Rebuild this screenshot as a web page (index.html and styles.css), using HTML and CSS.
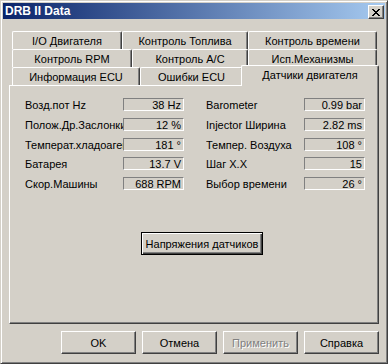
FILE: index.html
```html
<!DOCTYPE html>
<html lang="ru">
<head>
<meta charset="utf-8">
<title>DRB II Data</title>
<link rel="stylesheet" href="styles.css">
</head>
<body>
<div class="window">
  <div class="titlebar">
    <span class="title">DRB II Data</span>
    <div class="close">
      <svg width="8" height="7" viewBox="0 0 8 7" shape-rendering="crispEdges"><path fill="#000" d="M0 0h2v1H0z M6 0h2v1H6z M1 1h2v1H1z M5 1h2v1H5z M2 2h4v1H2z M3 3h2v1H3z M2 4h4v1H2z M1 5h2v1H1z M5 5h2v1H5z M0 6h2v1H0z M6 6h2v1H6z"/></svg>
    </div>
  </div>

  <div class="tabs">
    <div class="tabrow">
      <div class="tab w110">I/O Двигателя</div>
      <div class="tab w126">Контроль Топлива</div>
      <div class="tab w129">Контроль времени</div>
    </div>
    <div class="tabrow">
      <div class="tab w120">Контроль RPM</div>
      <div class="tab w116">Контроль A/C</div>
      <div class="tab w129">Исп.Механизмы</div>
    </div>
    <div class="tabrow">
      <div class="tab w128">Информация ECU</div>
      <div class="tab w103">Ошибки ECU</div>
      <div class="tab selected">Датчики двигателя</div>
    </div>
  </div>

  <div class="panel">
    <div class="fields">
      <div class="field"><span class="label">Возд.пот Hz</span><span class="value">38 Hz</span></div>
      <div class="field"><span class="label">Barometer</span><span class="value">0.99 bar</span></div>
      <div class="field"><span class="label">Полож.Др.Заслонки</span><span class="value">12 %</span></div>
      <div class="field"><span class="label">Injector Ширина</span><span class="value">2.82 ms</span></div>
      <div class="field"><span class="label">Температ.хладоагента</span><span class="value">181 °</span></div>
      <div class="field"><span class="label">Темпер. Воздуха</span><span class="value">108 °</span></div>
      <div class="field"><span class="label">Батарея</span><span class="value">13.7 V</span></div>
      <div class="field"><span class="label">Шаг Х.Х</span><span class="value">15</span></div>
      <div class="field"><span class="label">Скор.Машины</span><span class="value">688 RPM</span></div>
      <div class="field"><span class="label">Выбор времени</span><span class="value">26 °</span></div>
    </div>
    <button class="btn default sensor">Напряжения датчиков</button>
  </div>

  <div class="buttons">
    <button class="btn">OK</button>
    <button class="btn">Отмена</button>
    <button class="btn disabled">Применить</button>
    <button class="btn">Справка</button>
  </div>
</div>
</body>
</html>
```

FILE: styles.css
```css
html, body {
  margin: 0;
  padding: 0;
  background: #d4d0c8;
}

body {
  font-family: "Liberation Sans", Arial, sans-serif;
  font-size: 11px;
  color: #000;
}

.window {
  box-sizing: border-box;
  width: 388px;
  height: 364px;
  padding: 2px;
  background: #d4d0c8;
  border: 1px solid;
  border-color: #d4d0c8 #404040 #404040 #d4d0c8;
  box-shadow: inset 1px 1px #ffffff, inset -1px -1px #808080;
}

.titlebar {
  display: flex;
  align-items: flex-start;
  height: 16px;
  padding-left: 2px;
  background: linear-gradient(to right, #0a246a, #a6caf0);
}

.title {
  flex: 1;
  color: #fff;
  font-weight: bold;
  font-size: 12px;
  line-height: 16px;
  white-space: nowrap;
}

.close {
  box-sizing: border-box;
  width: 16px;
  height: 14px;
  margin-top: 2px;
  margin-right: 1px;
  display: flex;
  align-items: center;
  justify-content: center;
  background: #d4d0c8;
  border: 1px solid;
  border-color: #ffffff #404040 #404040 #ffffff;
  box-shadow: inset -1px -1px #808080;
}

.close svg {
  display: block;
}

.tabs {
  margin-top: 12px;
  margin-left: 9px;
  width: 365px;
}

.tabrow {
  display: flex;
  height: 18px;
  align-items: flex-start;
}

.tab {
  box-sizing: border-box;
  flex-shrink: 0;
  height: 18px;
  padding-top: 1px;
  line-height: 16px;
  text-align: center;
  white-space: nowrap;
  background: #d4d0c8;
  border-top: 1px solid #ffffff;
  border-left: 1px solid #ffffff;
  border-right: 1px solid #404040;
  border-radius: 2px 2px 0 0;
  box-shadow: inset -1px 0 #808080;
}

.w103 { width: 103px; }
.w110 { width: 110px; }
.w116 { width: 116px; }
.w120 { width: 120px; }
.w126 { width: 126px; }
.w128 { width: 128px; }
.w129 { width: 129px; }

.tab.selected {
  position: relative;
  z-index: 2;
  width: 138px;
  height: 21px;
  margin: -2px -2px 0 -2px;
  padding-top: 1px;
}

.panel {
  box-sizing: border-box;
  width: 370px;
  height: 239px;
  margin-left: 6px;
  padding: 12px 0 0 15px;
  background: #d4d0c8;
  border: 1px solid;
  border-color: #ffffff #404040 #404040 #ffffff;
  box-shadow: inset -1px -1px #808080;
}

.fields {
  display: grid;
  grid-template-columns: 159px 159px;
  column-gap: 22px;
  row-gap: 6.75px;
}

.field {
  display: flex;
  height: 13px;
}

.label {
  width: 98px;
  overflow: hidden;
  white-space: nowrap;
  line-height: 14px;
}

.value {
  box-sizing: border-box;
  width: 61px;
  height: 13px;
  padding-right: 2px;
  line-height: 12px;
  text-align: right;
  white-space: nowrap;
  overflow: hidden;
  border: 1px solid;
  border-color: #808080 #ffffff #ffffff #808080;
}

.btn {
  box-sizing: border-box;
  width: 75px;
  height: 23px;
  padding: 0;
  margin: 0;
  font-family: "Liberation Sans", Arial, sans-serif;
  font-size: 11px;
  color: #000;
  background: #d4d0c8;
  border: 1px solid;
  border-color: #ffffff #404040 #404040 #ffffff;
  border-radius: 0;
  box-shadow: inset -1px -1px #808080;
  white-space: nowrap;
}

.btn.default {
  border: 1px solid #000;
  box-shadow: inset 1px 1px #ffffff, inset -1px -1px #404040, inset -2px -2px #808080;
}

.sensor {
  display: block;
  width: 122px;
  margin-top: 42px;
  margin-left: 116px;
}

.btn.disabled {
  color: #808080;
  text-shadow: 1px 1px #ffffff;
}

.buttons {
  display: flex;
  justify-content: flex-end;
  gap: 6px;
  width: 370px;
  margin-left: 6px;
  margin-top: 7px;
}
```
